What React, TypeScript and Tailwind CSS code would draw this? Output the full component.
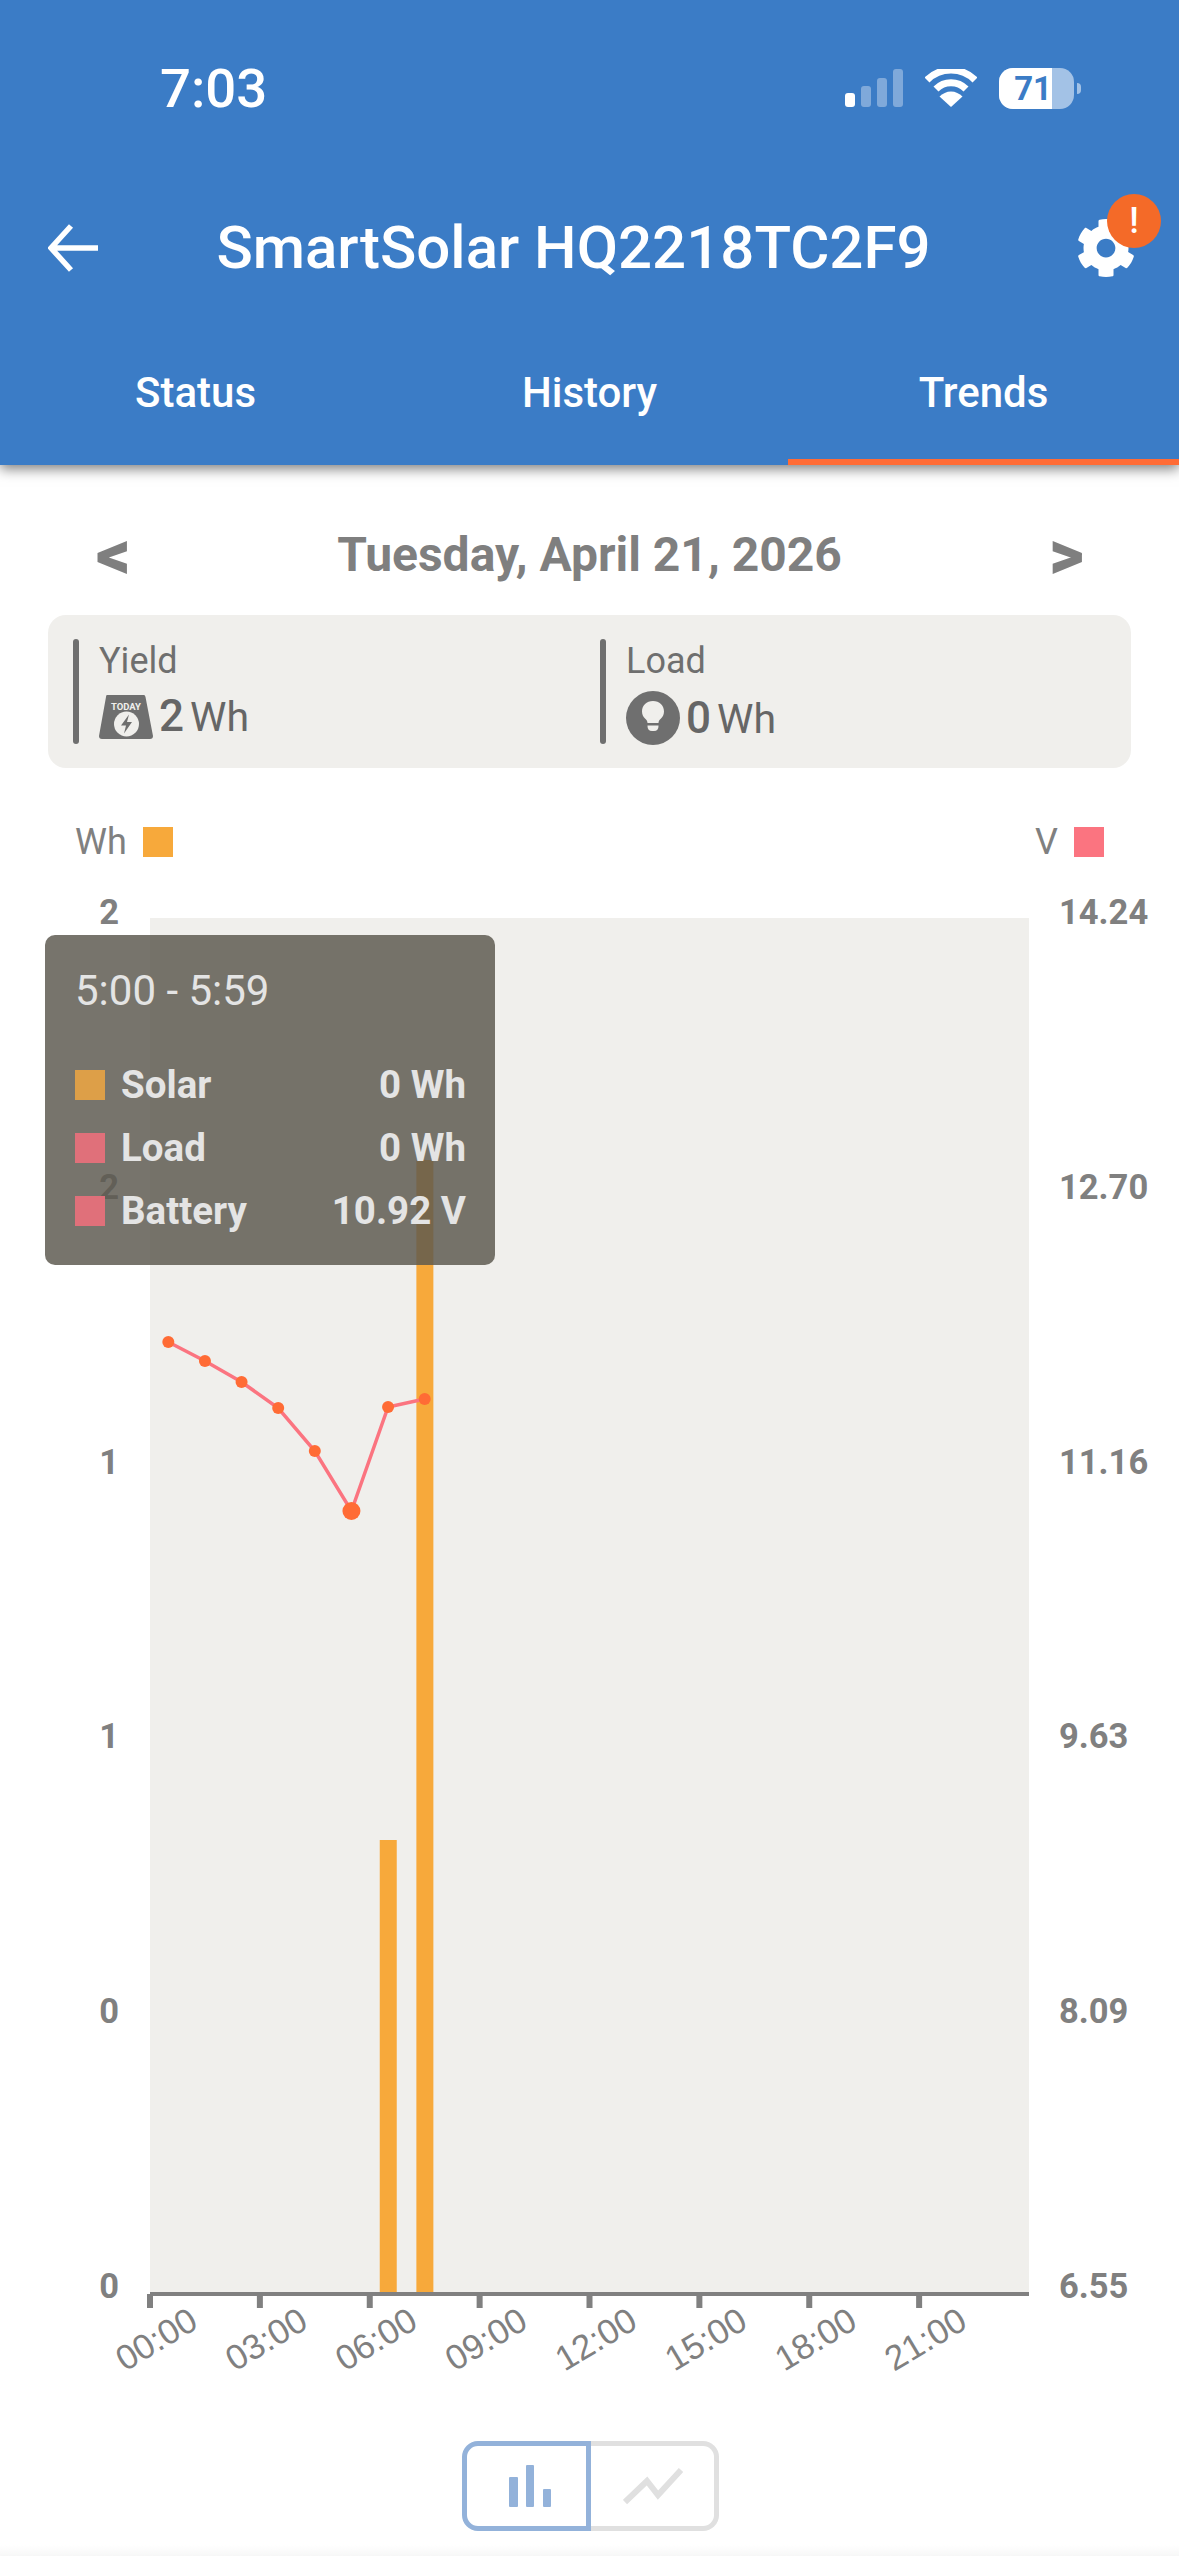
import { FaCog } from "react-icons/fa";

const leftTicks = ["2", "2", "1", "1", "0", "0"];
const rightTicks = ["14.24", "12.70", "11.16", "9.63", "8.09", "6.55"];
const hours = ["00:00", "03:00", "06:00", "09:00", "12:00", "15:00", "18:00", "21:00"];

// chart coordinates, origin at the plot's top left corner
const PLOT_W = 879;
const PLOT_H = 1376;
const HOUR_W = PLOT_W / 24;

const voltage = [424, 443, 464, 490, 533, 593, 489, 481];
const yieldBars = [
  { hour: 6, top: 922 },
  { hour: 7, top: 242 },
];

const rows = [
  { label: "Solar", value: "0 Wh", color: "bg-[#dd9f48]" },
  { label: "Load", value: "0 Wh", color: "bg-[#e0707a]" },
  { label: "Battery", value: "10.92 V", color: "bg-[#e0707a]" },
];

function StatusIcons() {
  return (
    <div className="flex items-center">
      <svg width="60" height="38" viewBox="0 0 60 38" className="mr-[20px]">
        <rect x="0" y="24" width="10" height="14" rx="3" fill="#fff" />
        <rect x="16" y="17" width="10" height="21" rx="3" fill="#fff" fillOpacity="0.35" />
        <rect x="32" y="9" width="10" height="29" rx="3" fill="#fff" fillOpacity="0.35" />
        <rect x="48" y="0" width="10" height="38" rx="3" fill="#fff" fillOpacity="0.35" />
      </svg>
      <svg width="52" height="38" viewBox="0 0 52 38" className="mr-[22px]">
        <path d="M2 11 A34 34 0 0 1 50 11" fill="none" stroke="#fff" strokeWidth="7" />
        <path d="M11 20 A21 21 0 0 1 41 20" fill="none" stroke="#fff" strokeWidth="7" />
        <path d="M26 38 L14.500 27.500 A16 16 0 0 1 37.500 27.500 Z" fill="#fff" />
      </svg>
      <div className="relative flex h-[41px] w-[75px] items-center overflow-hidden rounded-[14px] bg-[#a3c2e6]">
        <div className="flex h-full w-[53px] items-center justify-end bg-white">
          <span className="text-[33px] font-bold leading-none text-[#3b7cc6]">71</span>
        </div>
      </div>
      <div className="ml-[3px] h-[11px] w-[4px] rounded-r-full bg-[#a3c2e6]" />
    </div>
  );
}

function TodayIcon() {
  return (
    <svg width="54" height="44" viewBox="0 0 54 44">
      <path d="M8 0 H45 Q46 0 46.500 2 L54 41 Q54 44 51 44 H3 Q0 44 0 41 L7 2 Q7 0 8 0 Z" fill="#6f6f6f" />
      <text x="27" y="15" textAnchor="middle" fontSize="9.500" fontWeight="700" fill="#f0efec">
        TODAY
      </text>
      <circle cx="27.500" cy="29" r="12.500" fill="#f0efec" />
      <path d="M30 19.500 L22 30.500 H27 L25 38.500 L33 27 H28 Z" fill="#6f6f6f" />
    </svg>
  );
}

function BulbIcon() {
  return (
    <svg width="54" height="54" viewBox="0 0 54 54">
      <circle cx="27" cy="27" r="27" fill="#6f6f6f" />
      <path
        d="M27 10 C20.500 10 16 14.500 16 20.500 C16 24 17.500 26 19 27.500 C20.500 29 21.500 30 21.500 32 H32.500 C32.500 30 33.500 29 35 27.500 C36.500 26 38 24 38 20.500 C38 14.500 33.500 10 27 10 Z"
        fill="#f0efec"
      />
      <path d="M21.500 34.500 H32.500 V35 Q32.500 40 28 40 H26 Q21.500 40 21.500 35 Z" fill="#f0efec" />
    </svg>
  );
}

function Stat({ label, icon, value }: { label: string; icon: React.ReactNode; value: string }) {
  return (
    <div className="flex h-[105px] w-[527px] flex-none gap-[20px]">
      <div className="h-full w-[6px] rounded-full bg-[#6f6f6f]" />
      <div className="flex flex-col">
        <span className="text-[36px] leading-[44px] text-[#6f6f6f]">{label}</span>
        <div className="mt-[8px] flex items-center gap-[6px] text-[41px] leading-[50px] text-[#666]">
          {icon}
          <span className="flex items-baseline">
            <b className="text-[44px] font-medium">{value}</b>
            <span className="ml-[6px]">Wh</span>
          </span>
        </div>
      </div>
    </div>
  );
}

function Chart() {
  return (
    <svg width={PLOT_W} height="1470" viewBox={`0 0 ${PLOT_W} 1470`} className="block overflow-visible">
      <rect width={PLOT_W} height={PLOT_H} fill="#f0efec" />
      {yieldBars.map((bar) => (
        <rect
          key={bar.hour}
          x={bar.hour * HOUR_W + 10}
          y={bar.top}
          width="17"
          height={PLOT_H - bar.top}
          fill="#f7a93b"
        />
      ))}
      <polyline
        points={voltage.map((y, i) => `${(i + 0.5) * HOUR_W},${y}`).join(" ")}
        fill="none"
        stroke="#fb7480"
        strokeWidth="3.5"
      />
      {voltage.map((y, i) => (
        <circle key={i} cx={(i + 0.5) * HOUR_W} cy={y} r={i === 5 ? 9 : 6} fill="#ff6b35" />
      ))}
      <rect x="0" y={PLOT_H - 2} width={PLOT_W} height="4" fill="#808080" />
      {hours.map((h, i) => {
        const x = i * 3 * HOUR_W;
        return (
          <g key={h}>
            <rect x={x - 3} y={PLOT_H} width="6" height="14" fill="#808080" />
            <text
              x={x + 50}
              y={PLOT_H + 33}
              textAnchor="end"
              fontSize="35"
              fontFamily="'Liberation Sans', sans-serif"
              fill="#808080"
              transform={`rotate(-31 ${x + 50} ${PLOT_H + 33})`}
            >
              {h}
            </text>
          </g>
        );
      })}
    </svg>
  );
}

export default function App() {
  return (
    <div className="relative flex h-[2556px] w-[1179px] flex-col overflow-hidden bg-white font-['Roboto',sans-serif]">
      <header className="relative z-10 flex h-[465px] flex-none flex-col bg-[#3b7cc6] text-white shadow-[0_4px_12px_rgba(0,0,0,0.5)]">
        <div className="flex h-[176px] items-center justify-between pl-[160px] pr-[98px]">
          <span className="pt-[2px] text-[54.500px] font-medium">7:03</span>
          <StatusIcons />
        </div>
        <div className="flex h-[144px] items-center pl-[48px] pr-[43px]">
          <svg width="50" height="50" viewBox="0 0 50 50" fill="none" stroke="#fff" strokeWidth="5.500">
            <path d="M50 25 H3 M23 3 L3 25 L23 47" />
          </svg>
          <h1 className="flex-1 pr-[27px] text-center text-[60px] font-medium leading-none">SmartSolar HQ2218TC2F9</h1>
          <div className="relative">
            <FaCog className="text-[60px]" />
            <div className="absolute -right-[25px] -top-[24px] flex h-[54px] w-[54px] items-center justify-center rounded-full bg-[#f46a28] text-[36px] font-medium">
              !
            </div>
          </div>
        </div>
        <div className="flex h-[145px]">
          {["Status", "History", "Trends"].map((tab) => (
            <div
              key={tab}
              className={`flex items-center justify-center border-b-[6px] pt-[6px] text-[42px] font-medium ${
                tab === "Trends" ? "w-[391px] flex-none border-[#ff6b35]" : "flex-1 border-transparent pr-[3px]"
              }`}
            >
              {tab}
            </div>
          ))}
        </div>
      </header>

      <main className="flex flex-1 flex-col">
        <div className="flex h-[150px] items-center justify-between px-[96px] pt-[30px] text-[#7f7f7f]">
          <span className="w-[34px] text-center text-[68px] font-black leading-none">&lt;</span>
          <span className="text-[48px] font-bold">Tuesday, April 21, 2026</span>
          <span className="w-[34px] text-center text-[68px] font-black leading-none">&gt;</span>
        </div>

        <div className="mx-[48px] flex h-[153px] items-center rounded-[18px] bg-[#f0efec] px-[25px]">
          <Stat label="Yield" icon={<TodayIcon />} value="2" />
          <Stat label="Load" icon={<BulbIcon />} value="0" />
        </div>

        <div className="mt-[59px] flex h-[30px] items-center justify-between pl-[75px] pr-[75px] text-[36px] text-[#808080]">
          <div className="flex items-center gap-[16px]">
            <span>Wh</span>
            <div className="h-[30px] w-[30px] bg-[#f7a93b]" />
          </div>
          <div className="flex items-center gap-[16px]">
            <span>V</span>
            <div className="h-[30px] w-[30px] bg-[#fb7480]" />
          </div>
        </div>

        <div className="relative mt-[38px] flex">
          <div className="-mt-[1px] flex h-[1410px] w-[150px] flex-col justify-between pr-[31px] text-right text-[34.500px] font-bold leading-[36px] text-[#808080]">
            {leftTicks.map((t, i) => (
              <span key={i}>{t}</span>
            ))}
          </div>
          <div className="pt-[23px]">
            <Chart />
          </div>
          <div className="-mt-[1px] flex h-[1410px] flex-1 flex-col justify-between pl-[30px] text-[34.500px] font-bold leading-[36px] text-[#808080]">
            {rightTicks.map((t) => (
              <span key={t}>{t}</span>
            ))}
          </div>

          {/* hover tooltip for the 5:00 bucket */}
          <div className="absolute left-[45px] top-[40px] flex h-[330px] w-[450px] flex-col rounded-[10px] bg-[rgba(92,88,78,0.83)] pl-[30px] pr-[29px] text-[#e4e4e4]">
            <div className="mt-[32px] text-[42px] font-normal leading-[48px]">5:00 - 5:59</div>
            <div className="mt-[55px] flex flex-col gap-[33px]">
              {rows.map((row) => (
                <div key={row.label} className="flex h-[30px] items-center text-[38.500px] font-bold">
                  <div className={`h-[30px] w-[30px] ${row.color}`} />
                  <span className="ml-[16px] flex-1">{row.label}</span>
                  <span>{row.value}</span>
                </div>
              ))}
            </div>
          </div>
        </div>

        <div className="ml-[2px] mt-[53px] flex justify-center">
          <div className="flex h-[90px] w-[129px] items-center justify-center rounded-l-[16px] border-[5px] border-[#93b2da] pl-[8px]">
            <svg width="43" height="42" viewBox="0 0 43 42" fill="#93b2da">
              <rect x="0" y="12" width="9" height="30" rx="1" />
              <rect x="17" y="0" width="8" height="42" rx="1" />
              <rect x="34" y="24" width="8" height="18" rx="1" />
            </svg>
          </div>
          <div className="flex h-[90px] w-[128px] items-center justify-center rounded-r-[16px] border-[5px] border-l-0 border-[#e0e0e0]">
            <svg width="60" height="38" viewBox="0 0 60 38" fill="none" stroke="#e0e0e0" strokeWidth="6">
              <path d="M2 35 L24 14 L35 28 L58 3" />
            </svg>
          </div>
        </div>
      </main>
      <div className="h-[11px] flex-none bg-gradient-to-b from-white to-[#f7f7f7]" />
    </div>
  );
}
